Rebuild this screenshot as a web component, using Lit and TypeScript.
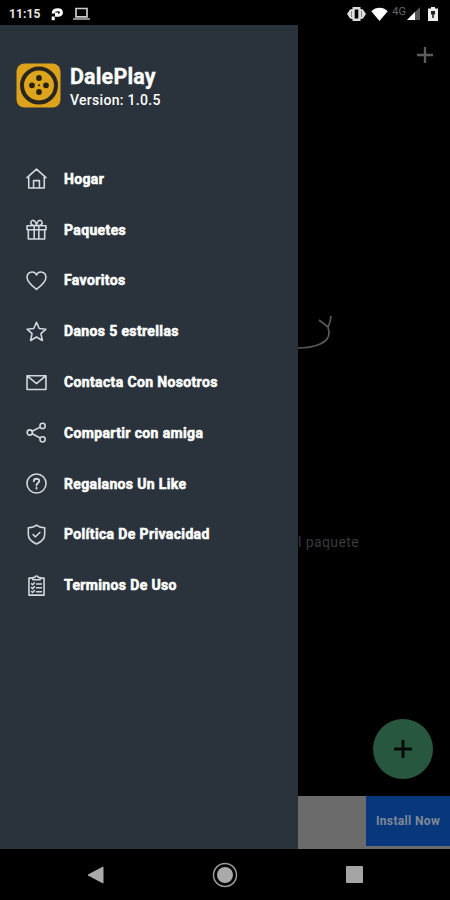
import { LitElement, html, css, svg } from "lit";
import { customElement } from "lit/decorators.js";

const icons = {
  home: svg`<path d="M1 9.2 10 1l9 8.2M2.6 8v11h14.8V8M7.2 19v-7h5.6v7"/>`,
  gift: svg`<path d="M1 6.5h18v3.7H1zM2.2 10.2V19h15.6v-8.8M7.8 6.5V19M12.2 6.5V19M10 6.5C5.5 6.6 4 4.8 4.8 2.6 6 .1 9.5 1 10 6.5 10.500 1 14 .1 15.200 2.600 16 4.800 14.500 6.600 10 6.500"/>`,
  heart: svg`<path d="M10 18.400C7 16 1 11.700 1 6.900 1 1.500 7.600.2 10 4.700 12.400.2 19 1.500 19 6.900 19 11.700 13 16 10 18.400Z"/>`,
  star: svg`<path d="m10 1.200 2.600 6 6.400.6-4.800 4.300 1.400 6.500L10 15.200l-5.600 3.400 1.400-6.500L1 7.800l6.400-.6Z"/>`,
  mail: svg`<path d="M1 3.500h18v13.200H1zM1.500 4l8.500 7 8.500-7"/>`,
  share: svg`<circle cx="3.600" cy="10" r="2.500"/><circle cx="15.800" cy="3.700" r="2.500"/><circle cx="15.800" cy="16.500" r="2.500"/><path d="m5.900 8.800 7.600-3.900M5.900 11.200l7.600 4.100"/>`,
  help: svg`<circle cx="10" cy="10" r="9.100"/><path d="M7.400 7.800C7.500 4.700 12.800 4.700 12.600 7.700 12.500 9.500 10 9.500 10 11.700M10 13.900v1" stroke-width="1.700"/>`,
  shield: svg`<path d="M10 1C7.800 2.800 5 3.300 2.200 3.500V10c0 4.500 3.600 7.200 7.800 9 4.200-1.800 7.800-4.500 7.800-9V3.500C15 3.300 12.200 2.800 10 1Z"/><path d="m6.700 10 2.300 2.200 4.200-4.100"/>`,
  list: svg`<path d="M6.500 3H2.800v16.200h14.400V3h-3.700M6.500 4.600V2.400h1.800C8.700.4 11.300.4 11.700 2.400h1.800v2.200ZM5.300 8.300l1 1L8 7.400M10 8.500h4.700M5.300 12l1 1L8 11.100M10 12.200h4.700M5.300 15.700l1 1L8 14.800M10 16h4.700"/>`,
};

const items: { icon: keyof typeof icons; label: string }[] = [
  { icon: "home", label: "Hogar" },
  { icon: "gift", label: "Paquetes" },
  { icon: "heart", label: "Favoritos" },
  { icon: "star", label: "Danos 5 estrellas" },
  { icon: "mail", label: "Contacta Con Nosotros" },
  { icon: "share", label: "Compartir con amiga" },
  { icon: "help", label: "Regalanos Un Like" },
  { icon: "shield", label: "Política De Privacidad" },
  { icon: "list", label: "Terminos De Uso" },
];

@customElement("status-bar")
class StatusBar extends LitElement {
  static styles = css`
    :host { display: flex; align-items: center; height: 25px; padding: 2px 12px 0 9px; box-sizing: border-box; background: #000; color: #e4e4e4; }
    .time { font-size: 12px; font-weight: 700; width: 42px; letter-spacing: 0.1px; }
    .gap { flex: 1; }
    .net { font-size: 11px; color: #666; margin: -5px 1px 0 4px; }
    svg { display: block; flex: none; }
    .laptop { margin-left: 9px; }
    .wifi { margin-left: 5px; }
    .battery { margin-left: 8px; }
  `;
  render() {
    return html`
      <span class="time">11:15</span>
      <svg width="13" height="14" viewBox="0 0 13 14"><path d="M2.200 13.300V9.500M2.200 6.500C2.200 3.500 4.500 2.700 7 2.700c4.500 0 4.500 5.600.2 5.600H5.500V5.500" fill="none" stroke="#fff" stroke-width="3"/></svg>
      <svg class="laptop" width="17" height="14" viewBox="0 0 17 14"><path d="M3 1.500h11v8.300H3z" fill="none" stroke="#ccc" stroke-width="1.700"/><path d="M0 11.200h17v1.600H0z" fill="#aaa"/></svg>
      <span class="gap"></span>
      <svg width="19" height="14" viewBox="0 0 19 14"><path d="M5.500 0h8v2L16 2.500 19 7l-3 4.500-2.500.5v2h-8v-2L3 11.500 0 7l3-4.500L5.500 2z" fill="#ddd"/><path d="M7.700 2.500h3.600v9H7.700z" fill="#000"/><path d="M4.500 4v6M14.500 4v6" stroke="#888"/></svg>
      <svg class="wifi" width="17" height="14" viewBox="0 0 17 14"><path d="M.3 4.300C5-.3 12-.3 16.700 4.300L8.500 14z" fill="#fff"/></svg>
      <span class="net">4G</span>
      <svg width="13" height="13" viewBox="0 0 13 13"><path d="M13 0v13H0z" fill="#555"/><path d="M8 5v8H0z" fill="#fff"/></svg>
      <svg class="battery" width="10" height="14" viewBox="0 0 10 14"><path d="M3 0h4v1.500h3V14H0V1.500h3z" fill="#eee"/><path d="M3 4h4v3.500H5.800V11H4.200V7.500H3z" fill="#222"/></svg>
    `;
  }
}

@customElement("app-drawer")
class AppDrawer extends LitElement {
  static styles = css`
    :host { display: block; width: 298px; height: 824px; background: #2a323b; color: #fff; }
    .brand { display: flex; align-items: center; padding: 38px 0 0 16px; height: 45px; gap: 9px; }
    .logo { display: block; flex: none; }
    .name { font-size: 21.500px; line-height: 25px; font-weight: 700; letter-spacing: 0.15px; padding-top: 3px; -webkit-text-stroke: 0.3px #fff; }
    .version { font-size: 14px; line-height: 20px; font-weight: 500; letter-spacing: 0.3px; padding-top: 1px; }
    .menu { padding-top: 45.500px; }
    .item { display: flex; align-items: center; height: 50.800px; padding-left: 26px; gap: 17px; }
    .icon { display: block; width: 21px; height: 21px; fill: none; stroke: #d3d9de; stroke-width: 1.500; stroke-linejoin: round; stroke-linecap: round; }
    .label { font-size: 14px; font-weight: 700; letter-spacing: 0.36px; white-space: nowrap; -webkit-text-stroke: 0.55px #fff; }
  `;
  render() {
    return html`
      <div class="brand">
        <svg class="logo" width="45" height="45" viewBox="0 0 45 45">
          <rect x=".5" y=".5" width="44" height="44" rx="8" fill="#dda21b"/>
          <circle cx="23" cy="22.500" r="17" fill="#dda51e" stroke="#29261f" stroke-width="4"/>
          <circle cx="23" cy="15" r="2.900" fill="#29220f"/><circle cx="16" cy="22.300" r="2.900" fill="#29220f"/>
          <circle cx="30" cy="22.300" r="2.900" fill="#29220f"/><circle cx="23" cy="29" r="2.900" fill="#29220f"/>
          <circle cx="23" cy="22.300" r="1" fill="#29220f"/>
        </svg>
        <div><div class="name">DalePlay</div><div class="version">Version: 1.0.5</div></div>
      </div>
      <div class="menu">
        ${items.map((i) => html`<div class="item"><svg class="icon" viewBox="0 0 20 20">${icons[i.icon]}</svg><span class="label">${i.label}</span></div>`)}
      </div>
    `;
  }
}

@customElement("dimmed-page")
class DimmedPage extends LitElement {
  static styles = css`
    :host { display: flex; flex-direction: column; width: 152px; height: 824px; background: #000; }
    svg { display: block; }
    .add { margin: 22px 17px 0 auto; }
    .arrow { margin-top: 252px; }
    .hint { margin-top: 182px; height: 18px; font-size: 14px; line-height: 18px; color: #393939; letter-spacing: 0.4px; }
    .fab { margin: 168px 17px 0 auto; width: 60px; height: 60px; border-radius: 50%; background: #28573f; display: grid; place-items: center; }
    .ad { margin-top: auto; height: 53px; background: #6b6b6b; display: flex; justify-content: flex-end; }
    .install { width: 84px; height: 50px; background: #08377c; color: #808a98; display: grid; place-items: center; font-size: 12px; font-weight: 700; letter-spacing: 0.35px; }
  `;
  render() {
    return html`
      <svg class="add" width="16" height="16" viewBox="0 0 16 16"><path d="M8 0v16M0 8h16" stroke="#5c5c5c" stroke-width="2.300"/></svg>
      <svg class="arrow" width="40" height="36" viewBox="0 0 40 36"><path d="M0 33C14 33 32 29 31 17L30 12M21 5l9 7q2.500-5 3-11" fill="none" stroke="#595959" stroke-width="1.700"/></svg>
      <div class="hint">l paquete</div>
      <div class="fab"><svg width="18" height="18" viewBox="0 0 18 18"><path d="M9 0v18M0 9h18" stroke="#050b08" stroke-width="3"/></svg></div>
      <div class="ad"><div class="install">Install Now</div></div>
    `;
  }
}

@customElement("nav-bar")
class NavBar extends LitElement {
  static styles = css`
    :host { display: flex; align-items: center; justify-content: space-between; height: 51px; padding: 0 87px; box-sizing: border-box; background: #000; }
    svg { display: block; }
  `;
  render() {
    return html`
      <svg width="17" height="18" viewBox="0 0 17 18"><path d="M16 1v16L1 9z" fill="#aaa" stroke="#aaa" stroke-linejoin="round"/></svg>
      <svg width="26" height="26" viewBox="0 0 26 26"><circle cx="13" cy="13" r="11.500" fill="none" stroke="#999" stroke-width="1.500"/><circle cx="13" cy="13" r="8" fill="#aaa"/></svg>
      <svg width="17" height="17" viewBox="0 0 17 17"><rect width="17" height="17" rx="1" fill="#a5a5a5"/></svg>
    `;
  }
}

@customElement("app-root")
class AppRoot extends LitElement {
  static styles = css`
    :host { display: block; width: 450px; height: 900px; overflow: hidden; background: #000; font-family: Roboto, "Liberation Sans", sans-serif; }
    .body { display: flex; height: 824px; }
  `;
  render() {
    return html`
      <status-bar></status-bar>
      <div class="body"><app-drawer></app-drawer><dimmed-page></dimmed-page></div>
      <nav-bar></nav-bar>
    `;
  }
}
